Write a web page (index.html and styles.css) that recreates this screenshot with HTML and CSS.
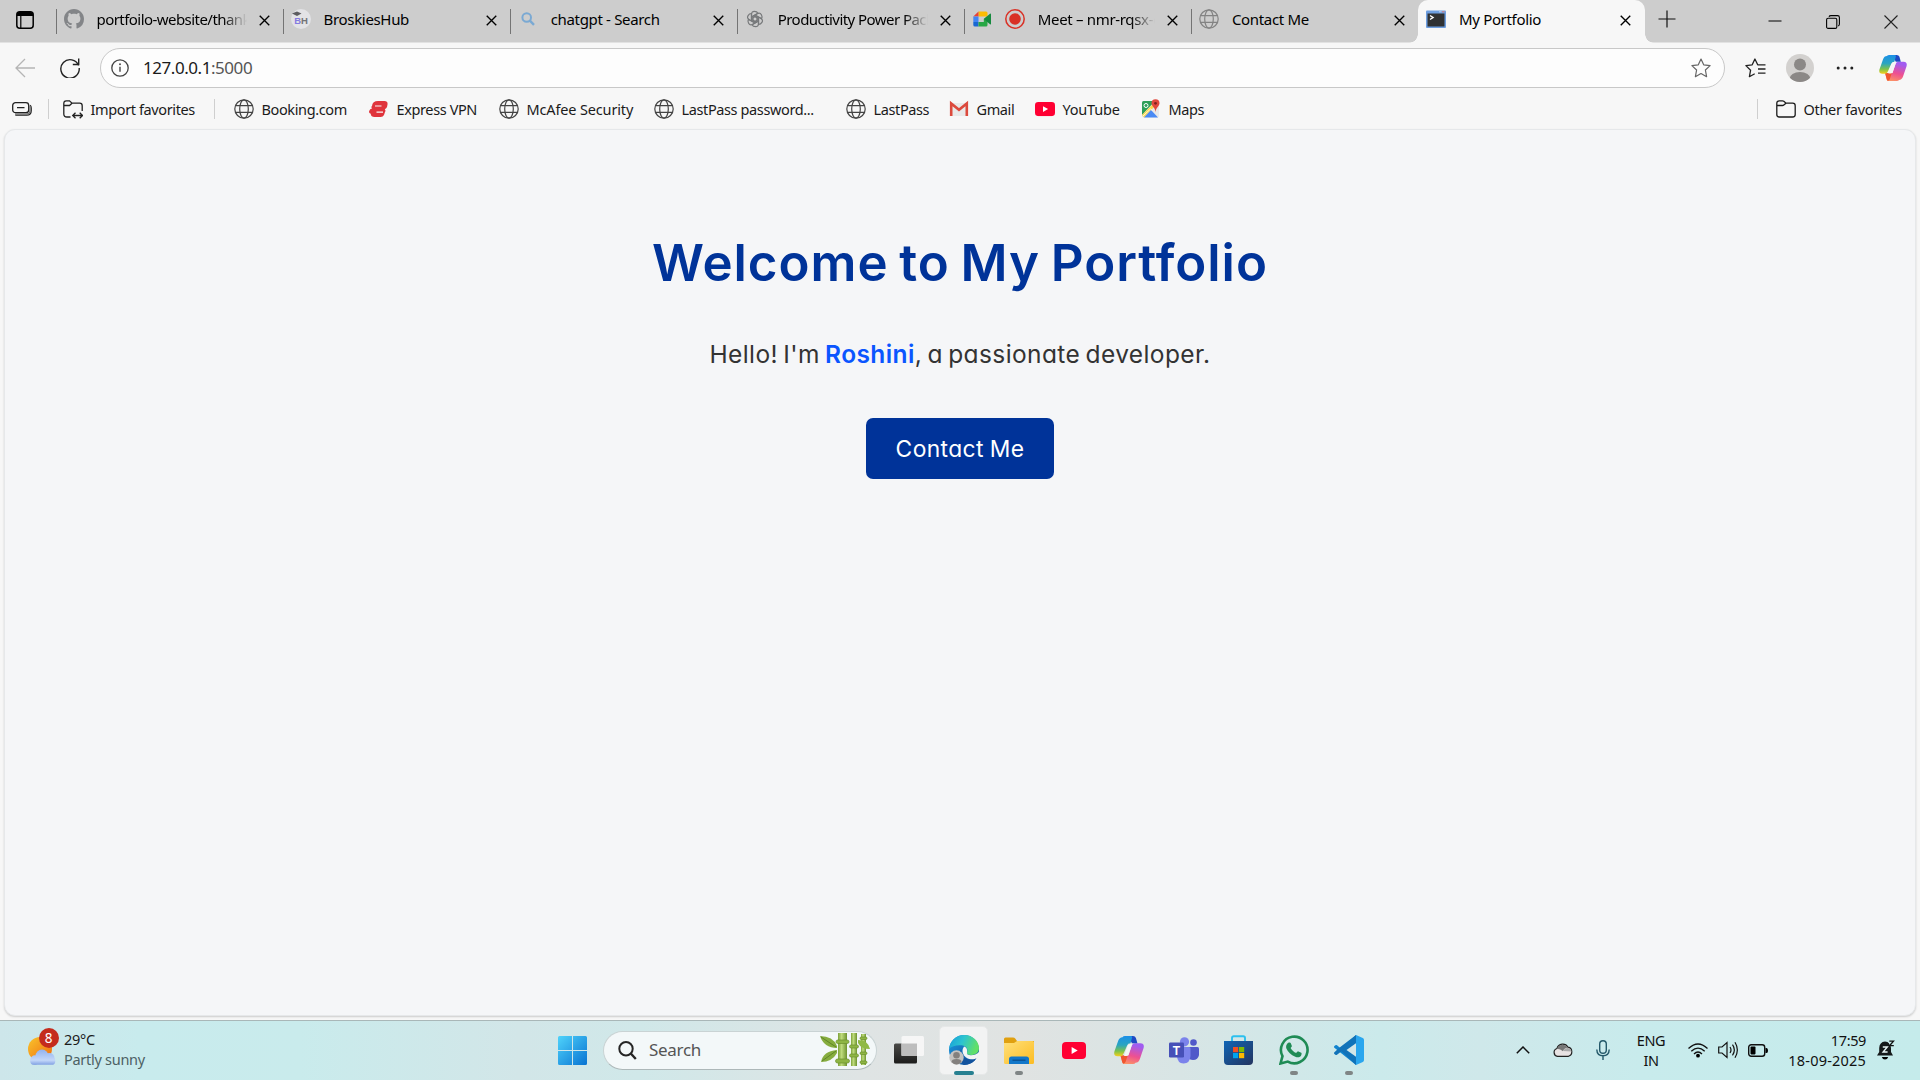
FILE: index.html
```html
<!DOCTYPE html>
<html lang="en">
<head>
<meta charset="utf-8">
<title>My Portfolio</title>
<link rel="stylesheet" href="styles.css">
</head>
<body>
<svg width="0" height="0" class="defs">
  <defs>
    <linearGradient id="cpA" x1="0" y1="0" x2="0" y2="1"><stop offset="0" stop-color="#1b8fe8"/><stop offset=".45" stop-color="#2aa5c0"/><stop offset=".75" stop-color="#7dc24b"/><stop offset="1" stop-color="#f5cf1b"/></linearGradient>
    <linearGradient id="cpB" x1=".3" y1="0" x2="0" y2="1"><stop offset="0" stop-color="#a15cf0"/><stop offset=".5" stop-color="#ee5091"/><stop offset="1" stop-color="#ffa05c"/></linearGradient>
    <linearGradient id="win" x1="0" y1="0" x2="1" y2="1"><stop offset="0" stop-color="#4fd3fb"/><stop offset="1" stop-color="#0873d2"/></linearGradient>
    <linearGradient id="edA" x1="0" y1="0" x2="1" y2=".3"><stop offset="0" stop-color="#169edb"/><stop offset=".5" stop-color="#2dc4cf"/><stop offset="1" stop-color="#61e068"/></linearGradient>
    <linearGradient id="edB" x1="0" y1="0" x2="1" y2="1"><stop offset="0" stop-color="#1b9de2"/><stop offset="1" stop-color="#114a97"/></linearGradient>
    <linearGradient id="fol" x1="0" y1="0" x2="1" y2="1"><stop offset="0" stop-color="#ffe07a"/><stop offset="1" stop-color="#fcbc22"/></linearGradient>
    <linearGradient id="sto" x1="0" y1="0" x2="1" y2="1"><stop offset="0" stop-color="#0f65b5"/><stop offset="1" stop-color="#24345f"/></linearGradient>
    <linearGradient id="sun" x1="0" y1="0" x2="1" y2="1"><stop offset="0" stop-color="#f8c52c"/><stop offset="1" stop-color="#f06a10"/></linearGradient>
    <linearGradient id="cld" gradientUnits="userSpaceOnUse" x1="0" y1="12" x2="0" y2="28"><stop offset="0" stop-color="#8fb0ee"/><stop offset=".7" stop-color="#c3d7f9"/><stop offset="1" stop-color="#7f9fe2"/></linearGradient>
    <linearGradient id="bam" x1="0" y1="0" x2="1" y2="0"><stop offset="0" stop-color="#7da23b"/><stop offset=".4" stop-color="#bfdc7d"/><stop offset="1" stop-color="#6d932f"/></linearGradient>
    <linearGradient id="tvA" x1="0" y1="0" x2="0" y2="1"><stop offset="0" stop-color="#4a4a48"/><stop offset="1" stop-color="#1c1c1b"/></linearGradient>
    <symbol id="globe" viewBox="0 0 20 20"><g fill="none" stroke="currentColor" stroke-width="1.2"><circle cx="10" cy="10" r="9.2"/><ellipse cx="10" cy="10" rx="4.3" ry="9.2"/><path d="M1.7 6.7h16.6M1.7 13.3h16.6"/></g></symbol>
    <symbol id="x" viewBox="0 0 12 12"><path d="M.8.8l10.4 10.4M11.2.8L.8 11.2" stroke="currentColor" stroke-width="1.5" fill="none"/></symbol>
    <symbol id="copilot" viewBox="0 0 30 28">
      <path d="M21.500 26.800Q20.800 28 19 28h-8q-2.200 0-2.800-2L6.500 19.500H14.500l3.300-10Q18.600 7.300 21 7.300h5.500q4.200.2 3.100 4.700l-3.800 11.200q-1.300 3.600-4.300 3.600z" fill="url(#cpB)"/>
      <path d="M6.500 19.500h7.200l-2.200 6.500q-1 2-2.300 1.800Q8.400 27 8.200 26z" fill="#f0562f"/>
      <path d="M14 0h5q2.200 0 2.900 2l1.500 5.300H18z" fill="#1e49c4"/>
      <path d="M8.500 1.200Q9.200 0 11 0h6q1.500 0 1 2l-1.500 5.300q-2.700 0-3.400 2.200L9.600 17.500q-.9 2.700-3.500 2.700H3.500Q-.7 20 .4 15.500L4.200 4.800Q5.500 1.200 8.500 1.200z" fill="url(#cpA)"/>
      <path d="M16.500 8h1.800l-3.800 10.500q-.7 1.500-2.200 1.500H10l3.600-10.200q.8-1.800 2.900-1.800z" fill="#f4f5f5"/>
    </symbol>
    <symbol id="youtube" viewBox="0 0 24 17"><rect width="24" height="17" rx="4" fill="#ff0033"/><path d="M9.600 5v7l6.100-3.500z" fill="#fff"/></symbol>
    <symbol id="folder" viewBox="0 0 20 18"><path d="M.8 3.500V14.500q0 2.500 2.500 2.500h13.400q2.500 0 2.500-2.500V5.700q0-2.500-2.500-2.500H10L7.800 1.200Q7.300.8 6.500.8H3.300Q.8.8.8 3.500zM.8 5.500H6.500q.8 0 1.300-.5L10 3.200" fill="none" stroke="currentColor" stroke-width="1.300"/></symbol>
  </defs>
</svg>

<header class="tabstrip">
  <div class="tab-actions">
    <svg width="18" height="18" viewBox="0 0 18 18"><rect x=".8" y=".8" width="16.400" height="16.400" rx="3" fill="none" stroke="#000" stroke-width="1.500"/><path d="M1 5V3.500Q1 1 3.500 1h11Q17 1 17 3.500V5z"/><path d="M4.800 5v12" stroke="#000" stroke-width="1.200"/></svg>
  </div>
  <div class="tab"><svg class="fav" viewBox="0 0 16 16" fill="#838588"><path d="M8 0C3.580 0 0 3.580 0 8c0 3.540 2.290 6.530 5.470 7.590.4.070.55-.17.55-.38 0-.19-.01-.82-.01-1.490-2.010.37-2.530-.49-2.690-.94-.09-.23-.48-.94-.82-1.130-.28-.15-.68-.52-.01-.53.63-.01 1.080.58 1.230.82.72 1.210 1.870.87 2.330.66.070-.52.280-.87.510-1.070-1.780-.2-3.640-.89-3.640-3.950 0-.87.310-1.590.82-2.150-.08-.2-.36-1.020.08-2.120 0 0 .67-.21 2.200.82.64-.18 1.320-.27 2-.27s1.360.09 2 .27c1.530-1.040 2.200-.82 2.200-.82.44 1.100.16 1.920.08 2.120.51.56.82 1.270.82 2.150 0 3.070-1.870 3.750-3.650 3.950.29.25.54.73.54 1.480 0 1.070-.01 1.930-.01 2.200 0 .21.15.46.55.38A8.010 8.010 0 0 0 16 8c0-4.420-3.580-8-8-8z"/></svg><span class="title fade tight">portfoilo-website/thank</span><svg class="close"><use href="#x"/></svg></div>
  <div class="tab"><svg class="fav" viewBox="0 0 20 20"><circle cx="10" cy="10" r="10" fill="#e3e3e6"/><path d="M1 4.500L6 2.500l4.500 2L6 7z" fill="#5d5d60"/><text x="3.300" y="15" class="bh" fill="#857be0">B</text><text x="10" y="15" class="bh" fill="#747478">H</text></svg><span class="title">BroskiesHub</span><svg class="close"><use href="#x"/></svg></div>
  <div class="tab"><svg class="fav" viewBox="0 0 20 20"><circle cx="8.700" cy="8.500" r="4.300" fill="none" stroke="#7aa9d3" stroke-width="2"/><path d="M11.800 11.600l4.200 4.200" stroke="#7aa9d3" stroke-width="2.400"/></svg><span class="title">chatgpt - Search</span><svg class="close"><use href="#x"/></svg></div>
  <div class="tab"><svg class="fav" viewBox="-10 -10 20 20"><g fill="none" stroke="#77797b" stroke-width="1.200"><path id="petal" d="M-3.500 2V-4.500Q-3.500-7.700-.5-7.700 2-7.700 3-5.800L-2-2.900V3"/><use href="#petal" transform="rotate(60)"/><use href="#petal" transform="rotate(120)"/><use href="#petal" transform="rotate(180)"/><use href="#petal" transform="rotate(240)"/><use href="#petal" transform="rotate(300)"/></g></svg><span class="title fade tight">Productivity Power Pack</span><svg class="close"><use href="#x"/></svg></div>
  <div class="tab"><svg class="fav" viewBox="0 0 20 20"><path d="M6.500 2.500H14q1.500 0 1.500 1.500v3.500H6.500z" fill="#fbbc04"/><path d="M6.500 2.500v5H1.300z" fill="#ea4335"/><path d="M1.300 7.500h5.200v5.500H1.300z" fill="#4285f4"/><path d="M1.300 13h5.200v4.500H3Q1.300 17.500 1.300 16z" fill="#1967d2"/><path d="M6.500 13h5.300V10L15.500 7V16q0 1.500-1.500 1.500H6.500z" fill="#28a745"/><path d="M11.800 10L18 4.700q1-.7 1 .5v9.600q0 1.200-1 .5z" fill="#168a3e"/></svg><svg class="fav rec" viewBox="0 0 20 20"><circle cx="10" cy="10" r="9.200" fill="none" stroke="#d93025" stroke-width="1.500"/><circle cx="10" cy="10" r="5.800" fill="#d93025"/></svg><span class="title fade">Meet – nmr-rqsx-c</span><svg class="close"><use href="#x"/></svg></div>
  <div class="tab"><svg class="fav grey"><use href="#globe"/></svg><span class="title">Contact Me</span><svg class="close"><use href="#x"/></svg></div>
  <div class="tab active"><svg class="fav" viewBox="0 0 20 20"><rect y="1.500" width="20" height="17.500" rx="1" fill="#6d9ee0"/><path d="M13 2.800h2.500" stroke="#b9d3f5"/><path d="M16 2.800h2.500" stroke="#dd7d7d"/><rect x="1.500" y="4.500" width="17" height="13" fill="#303234"/><path d="M4 6.500l3 2-3 2" stroke="#fff" stroke-width="1.500" fill="none"/></svg><span class="title">My Portfolio</span><svg class="close"><use href="#x"/></svg></div>
  <div class="newtab"><svg width="18" height="18" viewBox="0 0 18 18"><path d="M9 .5v17M.5 9h17" stroke="#111" stroke-width="1.200"/></svg></div>
  <div class="winctl">
    <svg width="14" height="14" viewBox="0 0 14 14"><path d="M.5 6h13" stroke="#000"/></svg>
    <svg width="14" height="14" viewBox="0 0 14 14"><g fill="none" stroke="#000" stroke-width="1.100"><rect x=".6" y="3.200" width="10.200" height="10.200" rx="1.500"/><path d="M3 1.700Q3.500.6 5 .6h6.500Q13.400.6 13.400 2.500V9q0 1.500-1.200 2"/></g></svg>
    <svg width="14" height="14" viewBox="0 0 14 14"><path d="M.5.500l13 13M13.500.500l-13 13" stroke="#222" stroke-width="1.100"/></svg>
  </div>
</header>

<nav class="toolbar">
  <svg class="back" width="20" height="20" viewBox="0 0 20 20"><path d="M20 10H1M10 1L1 10l9 9" fill="none" stroke="#b5b5b5" stroke-width="1.300"/></svg>
  <svg class="reload" width="20" height="20" viewBox="0 0 20 20"><path d="M18.600 7.500A9.200 9.200 0 1 0 19.200 10M18.700.5V6.500H12.800" fill="none" stroke="#222" stroke-width="1.400"/></svg>
  <div class="address">
    <svg width="18" height="18" viewBox="0 0 18 18"><circle cx="9" cy="9" r="8.200" fill="none" stroke="#444" stroke-width="1.300"/><path d="M9 7.800v5" stroke="#444" stroke-width="1.400"/><circle cx="9" cy="5.300" r=".95" fill="#444"/></svg>
    <span class="url">127.0.0.1<span class="port">:5000</span></span>
    <svg width="20" height="20" viewBox="0 0 20 20"><path d="M10 1l2.700 5.800 6.400.8-4.700 4.400 1.200 6.700L10 15.500l-5.600 3.200 1.200-6.700L.9 7.600l6.400-.8z" fill="none" stroke="#666" stroke-width="1.200" stroke-linejoin="round"/></svg>
  </div>
  <svg class="favs" width="21" height="20" viewBox="0 0 21 20"><path d="M20.500 6.800H12.700L9.900 1 7.200 6.800.9 7.600l4.700 4.600-1.200 6.500 5.300-3M13 11h7.500M13 15.200h7.500" fill="none" stroke="#222" stroke-width="1.300" stroke-linejoin="round"/></svg>
  <svg class="avatar" width="28" height="28" viewBox="0 0 28 28"><clipPath id="av"><circle cx="14" cy="14" r="14"/></clipPath><g clip-path="url(#av)"><rect width="28" height="28" fill="#d3d1cf"/><circle cx="14" cy="10.500" r="6" fill="#8b8886"/><ellipse cx="14" cy="25" rx="10.500" ry="7" fill="#8b8886"/></g></svg>
  <svg class="more" width="18" height="4" viewBox="0 0 18 4" fill="#222"><circle cx="2.200" cy="2" r="1.500"/><circle cx="9" cy="2" r="1.500"/><circle cx="15.800" cy="2" r="1.500"/></svg>
  <svg class="cop" width="28" height="26"><use href="#copilot"/></svg>
</nav>

<nav class="bookmarks">
  <svg class="bm-first" width="20" height="14" viewBox="0 0 20 14"><g fill="none" stroke="#222" stroke-width="1.300"><rect x=".7" y=".7" width="16" height="10" rx="2.800"/><path d="M5 5.700h7.500M3.300 13.100h11.500q4.400 0 4.400-4.400V6q0-2-1.200-2.800"/><path d="M3 12h12q3 0 3-3V4" stroke="#777"/></g></svg>
  <i class="sep"></i>
  <a class="bm w-import"><svg width="20" height="19" viewBox="0 0 20 19"><path d="M7.500 17H4Q.8 17 .8 14V3.500Q.8.8 3.300.8h3.200L9 3.200h7.700q2.500 0 2.500 2.500V11M.8 5.500H6.500L9 3.200M10 15.500h9.500M12.500 12.800L9.700 15.500l2.800 2.700M16.700 12.800l2.800 2.700-2.800 2.700" fill="none" stroke="#222" stroke-width="1.300"/></svg><span>Import favorites</span></a>
  <i class="sep second"></i>
  <a class="bm w1"><svg class="gl"><use href="#globe"/></svg><span>Booking.com</span></a>
  <a class="bm w2"><svg width="20" height="20" viewBox="0 0 20 20"><path d="M9 2h6.500q3.500 0 3 3.500L18 8q-.5 1.500-2.200 2.200Q17 11.500 16 13l-1 3q-1 2-3.300 2H5.500q-3.500 0-3.800-3.200Q-.5 14 .2 12 .8 9.800 3 9.500 1.800 7.800 3 7 3.500 2 9 2z" fill="#e0343c"/><path d="M6 7h6.500M7.500 13.200H14" stroke="#f7f7f7" stroke-width="1.200"/></svg><span>Express VPN</span></a>
  <a class="bm w3"><svg class="gl"><use href="#globe"/></svg><span>McAfee Security</span></a>
  <a class="bm w4"><svg class="gl"><use href="#globe"/></svg><span>LastPass password...</span></a>
  <a class="bm w5"><svg class="gl"><use href="#globe"/></svg><span>LastPass</span></a>
  <a class="bm w6"><svg width="20" height="20" viewBox="0 0 20 20"><path d="M2 4h16v13H2z" fill="#e9e9e9"/><path d="M2.200 17V4.500l7.800 6.300 7.800-6.300V17" fill="none" stroke="#dc4a3d" stroke-width="2.600"/></svg><span>Gmail</span></a>
  <a class="bm w7"><svg width="20" height="20"><use href="#youtube" y="3" width="20" height="14.200"/></svg><span>YouTube</span></a>
  <a class="bm w8"><svg width="20" height="20" viewBox="0 0 20 20"><rect x="1" y="2" width="17" height="16.500" rx="1.500" fill="#e8e8e8"/><path d="M1 3.500Q1 2 2.500 2H14L1 16z" fill="#2e9e57"/><path d="M1 16L14 3l2 2L3 18.500z" fill="#fbd84b"/><path d="M3 18.500L10 11l7 7.500z" fill="#4a8af4"/><path d="M2 17L9.500 10l2 1.500" fill="none" stroke="#fff" stroke-width=".8"/><circle cx="5" cy="6.500" r="2" fill="none" stroke="#fff"/><path d="M14.500.2a4 4 0 0 1 4 4c0 3-4 4.500-4 9.300 0-4.800-4-6.300-4-9.300a4 4 0 0 1 4-4z" fill="#e0483d"/><circle cx="14.500" cy="4.300" r="1.400" fill="#7d231d"/></svg><span>Maps</span></a>
  <i class="sep right"></i>
  <a class="bm other"><svg width="20" height="18"><use href="#folder"/></svg><span>Other favorites</span></a>
</nav>

<main class="page">
  <h1>Welcome to My Portfolio</h1>
  <p>Hello! I'm <strong>Roshini</strong>, a passionate developer.</p>
  <a class="btn">Contact Me</a>
</main>

<footer class="taskbar">
  <div class="weather">
    <div class="wicon">
      <svg width="28" height="28" viewBox="0 0 28 28"><circle cx="12" cy="12" r="12" fill="url(#sun)"/><g fill="url(#cld)"><circle cx="7" cy="23" r="4.700"/><circle cx="14" cy="19" r="6.500"/><circle cx="21.500" cy="21" r="5"/><rect x="2.300" y="20" width="25" height="7.800" rx="3.900"/></g></svg>
      <span class="badge">8</span>
    </div>
    <div class="wtext"><div>29°C</div><div class="dim">Partly sunny</div></div>
  </div>
  <div class="apps">
    <svg class="start" width="29" height="29" viewBox="0 0 29 29" fill="url(#win)"><path d="M1.500 0H14v14H0V1.500Q0 0 1.500 0zM15 0h12.500Q29 0 29 1.500V14H15zM0 15h14v14H1.500Q0 29 0 27.500zM15 15h14v12.500q0 1.500-1.500 1.500H15z"/></svg>
    <div class="search">
      <svg width="19" height="19" viewBox="0 0 19 19"><circle cx="8" cy="7.800" r="6.700" fill="none" stroke="#252525" stroke-width="2"/><path d="M12.800 12.500l5 5.500" stroke="#252525" stroke-width="2.400"/></svg>
      <span>Search</span>
      <svg class="bamboo" width="50" height="34" viewBox="0 0 50 34"><path d="M0 3q13 0 17 10v2Q4 15 0 3z" fill="#86ad3f"/><path d="M1 29q2-11 16-12v3Q12 29 1 29z" fill="#86ad3f"/><path d="M1 4l15 10M2 28l14-10" stroke="#5f8528" fill="none"/><rect x="18" width="9" height="33" fill="url(#bam)"/><rect x="31" width="6" height="33" fill="url(#bam)"/><rect x="41" y="1" width="5" height="31" fill="url(#bam)"/><g fill="#8eb544" stroke="#6b912c" stroke-width=".7"><rect x="16" y="7" width="13" height="3.500" rx="1.700"/><rect x="15.500" y="26" width="14" height="4" rx="2"/><rect x="29.500" y="12" width="9" height="3" rx="1.500"/><rect x="29.500" y="21" width="9" height="3" rx="1.500"/><rect x="40" y="4" width="7" height="2.500" rx="1.200"/><rect x="40" y="19" width="7" height="2.500" rx="1.200"/><rect x="40" y="28" width="7" height="2.500" rx="1.200"/></g><path d="M38 7q10 0 12 9-9 0-12-6z" fill="#8fb944"/></svg>
    </div>
    <div class="app"><svg width="30" height="30" viewBox="0 0 30 30"><rect y="8.500" width="23" height="20" rx="1.500" fill="url(#tvA)"/><rect x="7.500" y="1" width="22.500" height="20" rx="1.500" fill="#f6f6f6"/><rect x="7.500" y="8.500" width="15.500" height="12.500" fill="#bdbdbd"/></svg></div>
    <div class="app current"><svg width="32" height="32" viewBox="0 0 32 32"><circle cx="16" cy="16" r="15" fill="url(#edB)"/><path d="M1.200 14.500C2.200 6.500 8.500 1 16.200 1 25 1 31 7.500 31 14c0 5-4 7-8 7-3.500 0-5-1.200-4.300-2.200 1.500-2 1-6.800-5-7.500-5.700-.6-9.500 1-12.500 3.200z" fill="url(#edA)"/><path d="M16 12.500q3.800 1.200 3 5.700-.8 2.800 4 3.100 4.500 0 8-3.300v3L28.500 25q-8 2-12.500-3.500-3-4.500 0-9z" fill="#f4f5f5"/><path d="M13.500 15q-1.500 5 3.500 9 5 3.500 11.500.3Q24 31 16 31 10 27 10.500 20z" fill="#12539e"/><circle cx="8.500" cy="23.500" r="7.200" fill="#c4c3c2"/><circle cx="8.500" cy="21.300" r="3.300" fill="#83807e"/><path d="M3.500 28q0-3 5-3t5 3q-5 5-10 0z" fill="#83807e"/></svg><i class="ind wide"></i></div>
    <div class="app"><svg width="30" height="27" viewBox="0 0 30 27"><path d="M0 2Q0 .5 1.500.5H9q1.500 0 2.200 1L13 4h17v6H0z" fill="#e0a010"/><path d="M0 6h10l3-2h15.500Q30 4 30 5.500V25.500Q30 27 28.500 27h-27Q0 27 0 25.500z" fill="url(#fol)"/><path d="M5 27V22q0-2.500 2.500-2.500h15q2.500 0 2.500 2.500v5z" fill="#1277c9"/><path d="M8.500 23.200h13" stroke="#0b4f8e" stroke-width="1.300"/></svg><i class="ind"></i></div>
    <div class="app"><svg width="24" height="17"><use href="#youtube"/></svg></div>
    <div class="app"><svg width="30" height="28"><use href="#copilot"/></svg></div>
    <div class="app"><svg width="30" height="27" viewBox="0 0 30 27"><circle cx="15.500" cy="4.800" r="4.600" fill="#7b83eb"/><circle cx="24.500" cy="5.500" r="3.300" fill="#5059c9"/><path d="M19 10h9.500Q30 10 30 11.500V18q-1 5-6 5-4 0-5-3z" fill="#5059c9"/><path d="M8 10h12.200q1.300 0 1.300 1.500V19q-.5 7.300-7 7.500-6-.5-6.500-7z" fill="#7b83eb"/><rect y="5.500" width="15" height="15" rx="1.300" fill="#4650b8"/><text x="3.700" y="17.500" class="tee">T</text></svg></div>
    <div class="app"><svg width="29" height="30" viewBox="0 0 29 30"><path d="M8 7V3q0-1.800 1.800-1.800h9.400Q21 1.200 21 3v4" fill="none" stroke="#2cc0ee" stroke-width="1.900"/><path d="M0 6h29v20q0 4-4 4H4q-4 0-4-4z" fill="url(#sto)"/><path d="M9 12h5.200v5.200H9z" fill="#f25022"/><path d="M15 12h5.200v5.200H15z" fill="#7fba00"/><path d="M9 18h5.200v5.200H9z" fill="#00a4ef"/><path d="M15 18h5.200v5.200H15z" fill="#ffb900"/></svg></div>
    <div class="app"><svg width="30" height="30" viewBox="0 0 30 30"><path d="M1.500 28.500l2-7.300A13.300 13.300 0 1 1 8.800 26.600z" fill="none" stroke="#1f8b55" stroke-width="2.600"/><path d="M10 7.500c.8-.2 1.500 0 1.800.8l1 2.500c.2.600-.2 1.200-1.200 2.300 1.500 2.600 3.200 4 5.600 5 1-1.200 1.500-2 2.200-1.700l2.900 1.400c.6.400.3 2.200-.4 3.100-1.200 1.400-3.300 1.700-5.600.8-4.300-1.600-7.400-4.700-8.900-8.200C6.500 10.700 8 8 10 7.500z" fill="#1f8b55"/></svg><i class="ind"></i></div>
    <div class="app"><svg width="30" height="30" viewBox="0 0 30 30"><path d="M22 0L7.500 14 3 10.300Q2.200 9.700 1.400 10.200L.4 11Q-.4 12 .4 12.800L22 30l1-8V8z" fill="#1284cf"/><path d="M22 30L7.500 16.200 3 19.700q-.8.600-1.600.1L.4 19Q-.4 18 .4 17.200L5 13 22 0v8.200L12.500 15l9.500 6.800z" fill="#1173b9"/><path d="M22 8.200L12.500 15l9.500 6.800z" fill="#d3e6e7"/><path d="M22 0l6.800 3Q30 3.600 30 5v20q0 1.400-1.200 2L22 30z" fill="#2aa6ee"/></svg><i class="ind"></i></div>
  </div>
  <div class="tray">
    <svg class="chev" width="14" height="8" viewBox="0 0 14 8"><path d="M.8 7.200L7 1l6.200 6.200" fill="none" stroke="#111" stroke-width="1.500"/></svg>
    <svg class="cloud" width="20" height="14" viewBox="0 0 20 14"><path d="M4.500 13.300a4 4 0 0 1-.5-7.800 6 6 0 0 1 11-1.300 4.700 4.700 0 0 1 .5 9.100z" fill="#e8e3e3" stroke="#222" stroke-width="1.200"/><path d="M4 5.800a6 6 0 0 1 10.700-1.400Q11 5 10 8.200 7.500 6.300 4 5.800z" fill="#777"/><path d="M10 8q2-3.500 5-3 3 .5 3.700 3.500z" fill="#aaa"/></svg>
    <svg class="mic" width="14" height="20" viewBox="0 0 14 20"><g fill="none" stroke="#24596a" stroke-width="1.400"><rect x="3.700" y=".7" width="6.600" height="12.500" rx="3.300"/><path d="M.8 9.500Q1 15.800 7 15.800T13.200 9.500M7 16v4"/></g></svg>
    <div class="lang">ENG<br>IN</div>
    <svg class="wifi" width="20" height="15" viewBox="0 0 20 15"><g fill="none" stroke="#111" stroke-width="1.300"><path d="M.5 5.500Q10-3.500 19.500 5.500M3.300 8.300Q10 2 16.700 8.300M6 11Q10 7 14 11"/></g><circle cx="10" cy="12.700" r="1.900"/></svg>
    <svg class="snd" width="20" height="18" viewBox="0 0 20 18"><g fill="none" stroke="#111" stroke-width="1.200"><path d="M.7 6H4l5-4.500v15L4 12H.7zM12 6q2 3 0 6M14.500 3.700q3.700 5.300 0 10.600M17 1.300q4.700 7.700 0 15.400"/></g></svg>
    <svg class="bat" width="20" height="13" viewBox="0 0 20 13"><rect x=".7" y=".7" width="16" height="11.600" rx="2.500" fill="none" stroke="#111" stroke-width="1.400"/><rect x="2.500" y="2.600" width="5" height="7.800" rx=".8"/><path d="M17.500 4h1q1.500 0 1.500 2.500T18.500 9h-1z"/></svg>
    <div class="clock">17:59<br><span class="date">18-09-2025</span></div>
    <svg class="bell" width="18" height="20" viewBox="0 0 18 20"><path d="M8 1.500Q2.500 2 2.200 8v4L0 15.500h16L14 12V8Q13.500 2 8 1.500z" fill="#15191a"/><path d="M4.800 17h6.400q-.8 2.500-3.200 2.500T4.800 17z"/><path d="M11 0h7v6h-5z" fill="#c9ebeb"/><path d="M12.300 1.200h4.200l-4 4.500h4.300" fill="none" stroke="#111" stroke-width="1.300"/><path d="M5.800 7h4.500l-4.200 5h4.500" fill="none" stroke="#e8f5f5" stroke-width="1.400"/></svg>
  </div>
</footer>
</body>
</html>
```
FILE: styles.css
```css
* { box-sizing: border-box; }
html, body { height: 100%; margin: 0; }
body {
  display: flex;
  flex-direction: column;
  background: #f7f7f7;
  color: #1b1b1b;
  font: 14.500px/20px "Noto Sans", "Open Sans", sans-serif;
  letter-spacing: -0.380px;
  overflow: hidden;
}
svg { display: block; flex: none; }
.defs { position: absolute; }

/* Tab strip */
.tabstrip { display: flex; flex: none; height: 43px; background: #cdcdcd; border-bottom: 1px solid #e2e2e2; }
.tab-actions { width: 55.500px; padding: 11px 0 0 16px; flex: none; }
.tab { position: relative; display: flex; width: 227.080px; height: 42px; padding: 0 13px 4px 8.500px; align-items: center; flex: none; color: #000; font-size: 15px; letter-spacing: -0.330px; }
.tab::before { content: ""; position: absolute; left: 0; top: 9px; width: 1px; height: 25px; background: #747474; }
.fav { width: 20px; height: 20px; margin-right: 12.500px; }
.fav.grey { color: #838383; }
.fav.rec { margin-left: .5px; }
.title { flex: 1; min-width: 0; overflow: hidden; white-space: nowrap; }
.tight { letter-spacing: -0.550px; }
.fade { margin-right: 12px; -webkit-mask-image: linear-gradient(90deg, #000 calc(100% - 24px), transparent); mask-image: linear-gradient(90deg, #000 calc(100% - 24px), transparent); }
.close { width: 11px; height: 11px; margin-top: 2px; }
.bh { font: bold 9.500px "Liberation Sans", sans-serif; letter-spacing: 0; }
.tee { font: bold 12px "Liberation Sans", sans-serif; fill: #fff; letter-spacing: 0; }
.active { height: 43px; padding-bottom: 5px; padding-right: 14px; background: #f7f7f7; border-radius: 10px 10px 0 0; }
.active::before, .active::after { content: ""; position: absolute; left: -9px; top: auto; bottom: 0; width: 9px; height: 9px; background: radial-gradient(circle at 0 0, transparent 8.500px, #f7f7f7 9px); }
.active::after { left: auto; right: -9px; background: radial-gradient(circle at 100% 0, transparent 8.500px, #f7f7f7 9px); }
.newtab { padding: 10px 0 0 13px; }
.winctl { display: flex; gap: 44px; margin-left: auto; padding: 14.500px 22px 0 0; }

/* Address row */
.toolbar { display: flex; flex: none; align-items: center; height: 49px; padding-left: 15px; }
.reload { margin-left: 25px; }
.address { display: flex; align-items: center; width: 1625px; height: 40px; margin-left: 20px; padding: 0 13px 0 10px; border: 1px solid #c8c8c8; border-radius: 20px; background: #fdfdfd; }
.url { flex: 1; margin-left: 14px; font-size: 17px; letter-spacing: -0.450px; color: #1a1a1a; }
.port { color: #555; }
.favs { margin-left: 20px; }
.avatar { margin-left: 20px; }
.more { margin-left: 22px; }
.cop { margin-left: 25px; }

/* Favorites bar */
.bookmarks { display: flex; flex: none; align-items: center; height: 37px; padding: 0 0 3px 12px; }
.sep { width: 1px; height: 20px; background: #cfcfcf; margin: 0 14px 0 16px; }
.sep.second { margin: 0 19px 0 0; }
.bm { display: flex; align-items: center; gap: 7.500px; white-space: nowrap; }
.gl { width: 20px; height: 20px; color: #444; }
.w-import { width: 151px; }
.w1 { width: 135px; } .w2 { width: 130px; } .w3 { width: 155px; } .w4 { width: 192px; }
.w5 { width: 103px; } .w6 { width: 86px; } .w7 { width: 106px; }
.w3 { letter-spacing: -0.150px; }
.w7 { letter-spacing: -0.200px; }
.sep.right { margin: 0 18px 0 auto; }
.other { width: 144px; letter-spacing: -0.300px; }

/* Portfolio page */
.page {
  flex: 1; margin: 0 4px 4px 4px; padding-top: 95px;
  display: flex; flex-direction: column; align-items: center;
  background: #f5f6f8; border: 1px solid #e6e8ea; border-radius: 11px;
  box-shadow: 0 1px 2px #ccc;
  font-family: Inter, sans-serif; font-feature-settings: "cv11";
}
.page h1 { margin: 0; font-size: 51px; line-height: 76px; font-weight: 600; color: #003399; letter-spacing: 0.950px; word-spacing: -3px; white-space: nowrap; }
.page p { margin: 34px 0 0; font-size: 24.500px; line-height: 38px; color: #333; letter-spacing: 0.400px; word-spacing: -2px; }
.page strong { color: #0a55ff; font-weight: 600; }
.btn { margin-top: 45px; width: 188px; height: 61px; border-radius: 7px; background: #003399; color: #fff; font-size: 22.800px; line-height: 61px; text-align: center; letter-spacing: 0.400px; word-spacing: -1px; }

/* Taskbar */
.taskbar {
  display: flex; flex: none; height: 60px; border-top: 1px solid #a9b7b8;
  background: linear-gradient(90deg, #cde6ea 0, #c8ebed 140px, #c9ebec 300px, #d2e6e8 520px, #d0e8e9 640px, #dfe4e4 860px, #e0e3e2 1020px, #d8e5e5 1180px, #cbeaeb 1380px, #cfe8ea 1480px, #c8ebec 1640px, #c5ebeb 1920px);
}
.weather { display: flex; width: 558px; padding: 6px 0 0 28px; }
.wicon { position: relative; width: 36px; padding-top: 10px; }
.badge { position: absolute; left: 10.500px; top: 1px; width: 20px; height: 20px; border-radius: 50%; background: #c42b1c; color: #fff; text-align: center; line-height: 20px; font-size: 13.500px; }
.wtext { padding-top: 2px; letter-spacing: -0.280px; }
.dim { color: #4d6164; }
.apps { display: flex; align-items: center; height: 58px; }
.search { display: flex; align-items: center; width: 274px; height: 39px; margin: 0 7px 0 16px; padding: 0 6px 0 14px; border-radius: 20px; background: #f3f8f9; border: 1px solid #c9d3d4; border-bottom-color: #adb8b9; }
.search span { flex: 1; margin-left: 12px; font-size: 17px; color: #555; letter-spacing: -0.300px; }
.app { position: relative; display: flex; align-items: center; justify-content: center; width: 49px; height: 49px; margin-right: 6px; border-radius: 5px; }
.current { background: #f2f3f3; border: 1px solid #e6e8e8; }
.ind { position: absolute; left: 20.500px; bottom: 0; width: 8px; height: 4px; border-radius: 2px; background: #7f8585; }
.ind.wide { left: 14px; width: 20px; background: #278090; bottom: -1px; }
.tray { display: flex; align-items: center; height: 58px; margin-left: auto; padding-right: 25px; text-align: center; color: #111; }
.cloud { margin-left: 23px; }
.mic { margin-left: 23px; }
.lang { width: 40px; margin-left: 21px; }
.wifi { margin-left: 17px; }
.snd { margin-left: 10px; }
.bat { margin-left: 10px; }
.clock { width: 98px; text-align: right; }
.date { letter-spacing: 0.200px; }
.bell { margin-left: 11px; }
```
